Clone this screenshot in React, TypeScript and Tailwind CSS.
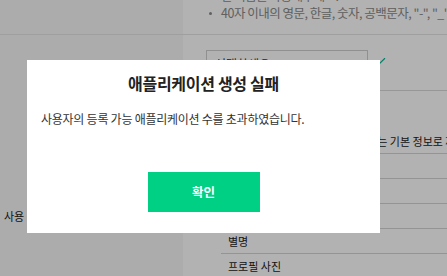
import React from 'react';
import { Check } from 'lucide-react';

const listItems = ['아이디', '이메일', '이름', '별명', '프로필 사진'];

const App: React.FC = () => {
  return (
    <div className="relative w-[447px] h-[276px] overflow-hidden bg-white font-['Noto_Sans_CJK_KR',sans-serif] text-[#333]">
      {/* Page behind the dialog */}
      <div className="flex flex-col">
        {/* Row: app name */}
        <div className="flex h-[35px] border-b border-[#e4e4e4]">
          <div className="w-[183px] shrink-0 bg-[#f7f7f7]" />
          <ul className="-mt-[13px] pl-[25px] text-[12.5px] leading-[17px] text-[#8a8a8a] tracking-[-0.5px]">
            <li className="pl-[13px] whitespace-nowrap">한 이름을 사용해주세요.</li>
            <li className="relative pl-[13px] whitespace-nowrap">
              <span className="absolute left-[1px] top-[8px] w-[3px] h-[3px] rounded-full bg-[#8a8a8a]" />
              40자 이내의 영문, 한글, 숫자, 공백문자, "-", "_" 만 사용할 수 있습니다.
            </li>
          </ul>
        </div>

        {/* Row: user info */}
        <div className="flex">
          <div className="w-[183px] shrink-0 bg-[#f7f7f7] pt-[173px] pl-[4px] text-[11px] leading-[16px] text-[#222]">
            사용 정보
          </div>
          <div className="flex-1 flex flex-col">
            <div className="flex items-start gap-[5px] pt-[15px] pb-[12px] pl-[23px] border-b border-[#d8d8d8]">
              <div className="flex items-center justify-between w-[162px] h-[28px] border border-[#cfcfcf] pl-[8px] pr-[10px] text-[12px] text-[#333]">
                <span>선택하세요</span>
                <span className="w-0 h-0 border-x-[4px] border-x-transparent border-t-[5px] border-t-[#555]" />
              </div>
              <Check size={14} strokeWidth={2} className="mt-[5px] text-[#00b894]" />
            </div>
            <div className="pt-[42px]">
              <p className="pl-[20px] text-[11px] leading-[17px] text-[#222] whitespace-nowrap">
                필수 동의 항목으로 자동 제공되는 정보는 기본 정보로 제공됩니다.
              </p>
              <ul className="mt-[3px] ml-[38px]">
                {listItems.map((item) => (
                  <li
                    key={item}
                    className="h-[25px] border-t border-[#d4d4d4] flex items-center pl-[7px] text-[11px] text-[#222]"
                  >
                    {item}
                  </li>
                ))}
              </ul>
            </div>
          </div>
        </div>
      </div>

      {/* Dimmed overlay with dialog */}
      <div className="absolute inset-0 bg-black/30 pl-[27px] pt-[60px]">
        <div className="w-[353px] h-[173px] bg-white flex flex-col">
          <h2 className="mt-[10px] text-center text-[16px] leading-[26px] font-bold text-[#222] tracking-[-0.3px]">
            애플리케이션 생성 실패
          </h2>
          <p className="mt-[15px] pl-[14px] text-[12px] leading-[16px] text-[#333] tracking-[-0.25px]">
            사용자의 등록 가능 애플리케이션 수를 초과하였습니다.
          </p>
          <div className="mt-[45px] flex justify-center">
            <button className="w-[112px] h-[40px] bg-[#00d084] text-white text-[12.5px] font-bold">
              확인
            </button>
          </div>
        </div>
      </div>
    </div>
  );
};

export default App;
